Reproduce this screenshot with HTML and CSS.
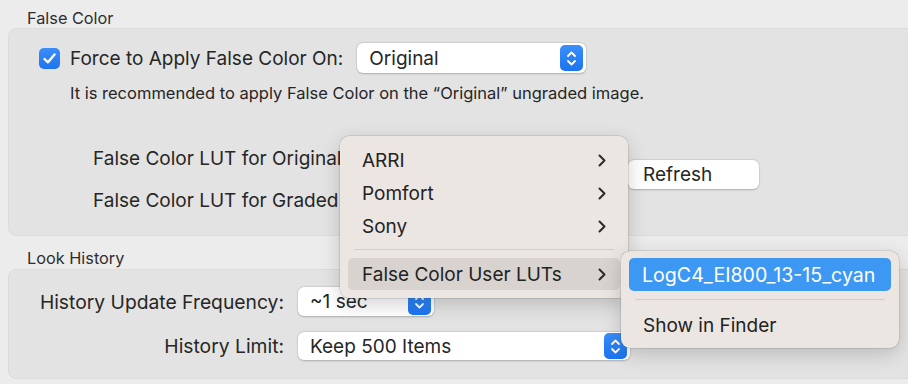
FILE: index.html
```html
<!DOCTYPE html>
<html>
<head>
<meta charset="utf-8">
<link rel="stylesheet" href="styles.css">
</head>
<body>
<div class="page">
  <div class="group-title">False Color</div>
  <div class="panel panel-fc">
    <div class="row-force">
      <span class="checkbox">
        <svg width="13" height="11" viewBox="0 0 13 11"><path d="M1.5 6 L5 9.3 L11.5 1.5" fill="none" stroke="#fff" stroke-width="2.4" stroke-linecap="round" stroke-linejoin="round"/></svg>
      </span>
      <span class="force-label">Force to Apply False Color On:</span>
      <div class="popup popup-original">
        <span class="popup-text">Original</span>
        <span class="stepper"><svg width="11" height="17" viewBox="0 0 11 17"><path d="M2 6 L5.5 2.5 L9 6 M2 11 L5.5 14.5 L9 11" fill="none" stroke="#fff" stroke-width="1.8" stroke-linecap="round" stroke-linejoin="round"/></svg></span>
      </div>
    </div>
    <div class="hint">It is recommended to apply False Color on the “Original” ungraded image.</div>
    <div class="lut-grid">
      <div class="lut-label">False Color LUT for Original</div>
      <div class="lut-slot"></div>
      <button class="push-btn">Refresh</button>
      <div class="lut-label">False Color LUT for Graded</div>
      <div class="lut-slot"></div>
    </div>
  </div>

  <div class="group-title group-title-2">Look History</div>
  <div class="panel panel-hist">
    <div class="hist-grid">
      <div class="hist-label">History Update Frequency:</div>
      <div class="popup popup-freq">
        <span class="popup-text">~1 sec</span>
        <span class="stepper"><svg width="11" height="17" viewBox="0 0 11 17"><path d="M2 6 L5.5 2.5 L9 6 M2 11 L5.5 14.5 L9 11" fill="none" stroke="#fff" stroke-width="1.8" stroke-linecap="round" stroke-linejoin="round"/></svg></span>
      </div>
      <div class="hist-label">History Limit:</div>
      <div class="popup popup-limit">
        <span class="popup-text">Keep 500 Items</span>
        <span class="stepper"><svg width="11" height="17" viewBox="0 0 11 17"><path d="M2 6 L5.5 2.5 L9 6 M2 11 L5.5 14.5 L9 11" fill="none" stroke="#fff" stroke-width="1.8" stroke-linecap="round" stroke-linejoin="round"/></svg></span>
      </div>
    </div>
  </div>

  <div class="menu menu-main">
    <div class="menu-item"><span>ARRI</span><svg class="chev" width="8" height="13" viewBox="0 0 8 13"><path d="M1.5 1.5 L6.5 6.5 L1.5 11.5" fill="none" stroke="#2a2a2a" stroke-width="2" stroke-linecap="round" stroke-linejoin="round"/></svg></div>
    <div class="menu-item"><span>Pomfort</span><svg class="chev" width="8" height="13" viewBox="0 0 8 13"><path d="M1.5 1.5 L6.5 6.5 L1.5 11.5" fill="none" stroke="#2a2a2a" stroke-width="2" stroke-linecap="round" stroke-linejoin="round"/></svg></div>
    <div class="menu-item"><span>Sony</span><svg class="chev" width="8" height="13" viewBox="0 0 8 13"><path d="M1.5 1.5 L6.5 6.5 L1.5 11.5" fill="none" stroke="#2a2a2a" stroke-width="2" stroke-linecap="round" stroke-linejoin="round"/></svg></div>
    <div class="menu-sep"></div>
    <div class="menu-item menu-item-open"><span>False Color User LUTs</span><svg class="chev" width="8" height="13" viewBox="0 0 8 13"><path d="M1.5 1.5 L6.5 6.5 L1.5 11.5" fill="none" stroke="#2a2a2a" stroke-width="2" stroke-linecap="round" stroke-linejoin="round"/></svg></div>
  </div>

  <div class="menu menu-sub">
    <div class="menu-item menu-item-sel"><span>LogC4_EI800_13-15_cyan</span></div>
    <div class="menu-sep menu-sep-sub"></div>
    <div class="menu-item"><span>Show in Finder</span></div>
  </div>
</div>
</body>
</html>
```

FILE: styles.css
```css
* { box-sizing: border-box; }
html, body {
  margin: 0;
  padding: 0;
  background: #ececec;
  overflow: hidden;
}
body {
  width: 908px;
  height: 384px;
  font-family: Inter, "Noto Sans", sans-serif;
  color: #262626;
}
.page {
  position: relative;
  width: 908px;
  height: 384px;
  padding-top: 8px;
}
.group-title {
  font-size: 16.3px;
  line-height: 20px;
  padding-left: 27px;
  color: #2e2e2e;
  height: 20px;
}
.group-title-2 {
  margin-top: 12px;
}
.panel {
  margin-left: 8px;
  margin-right: -20px;
  background: #e3e3e3;
  border: 1px solid #dcdcdc;
  border-radius: 8px;
}
.panel-fc {
  height: 208px;
  padding: 14px 0 0 30px;
}
.row-force {
  display: flex;
  align-items: center;
  height: 30px;
}
.checkbox {
  width: 21px;
  height: 21px;
  border-radius: 5px;
  background: linear-gradient(#3b8df8, #1f74ef);
  display: flex;
  align-items: center;
  justify-content: center;
  flex: none;
}
.force-label {
  font-size: 19px;
  margin-left: 10px;
  white-space: nowrap;
}
.popup {
  position: relative;
  display: flex;
  align-items: center;
  background: #fff;
  border-radius: 6px;
  box-shadow: 0 0.5px 2px rgba(0,0,0,0.22), 0 0 0 0.5px rgba(0,0,0,0.06);
  font-size: 19px;
  flex: none;
}
.popup-text {
  padding-left: 12px;
  flex: 1;
  white-space: nowrap;
}
.stepper {
  width: 23px;
  height: 26px;
  margin-right: 3px;
  border-radius: 5px;
  background: linear-gradient(#3a8ff9, #1b74f0);
  display: flex;
  align-items: center;
  justify-content: center;
  flex: none;
}
.popup-original {
  width: 229px;
  height: 30px;
  margin-left: 14px;
}
.hint {
  font-size: 16.5px;
  margin-top: 10px;
  padding-left: 31px;
  line-height: 20px;
  white-space: nowrap;
}
.lut-grid {
  display: grid;
  grid-template-columns: 258px 277px 131px;
  grid-template-rows: 42px 42px;
  margin-top: 34px;
  margin-left: 54px;
}
.lut-label {
  font-size: 19px;
  display: flex;
  align-items: center;
  white-space: nowrap;
}
.push-btn {
  grid-column: 3;
  grid-row: 1 / span 2;
  align-self: start;
  margin-top: 23px;
  height: 29px;
  width: 131px;
  border: none;
  background: #fff;
  border-radius: 6px;
  box-shadow: 0 0.5px 2px rgba(0,0,0,0.22), 0 0 0 0.5px rgba(0,0,0,0.06);
  font-family: inherit;
  font-size: 19px;
  color: #262626;
  text-align: left;
  padding-left: 15px;
}
.panel-hist {
  height: 110px;
  margin-top: 1px;
  padding-top: 17px;
}
.hist-grid {
  display: grid;
  grid-template-columns: 275px auto;
  column-gap: 14px;
  row-gap: 16px;
  align-items: center;
}
.hist-label {
  font-size: 19.3px;
  text-align: right;
  white-space: nowrap;
}
.popup-freq {
  width: 136px;
  height: 29px;
}
.popup-limit {
  width: 332px;
  height: 28px;
}
.menu {
  position: absolute;
  background: #ece6e2;
  border-radius: 9px;
  box-shadow: 0 0 0 0.5px rgba(0,0,0,0.18), 0 6px 20px rgba(0,0,0,0.18);
  padding: 7px 8px;
  font-size: 19px;
}
.menu-main {
  left: 340px;
  top: 136px;
  width: 288px;
  height: 162px;
}
.menu-item {
  height: 33px;
  display: flex;
  align-items: center;
  justify-content: space-between;
  padding: 1px 14px 0 14px;
  border-radius: 5px;
  color: #222;
  white-space: nowrap;
}
.chev { flex: none; }
.menu-sep {
  height: 16px;
  position: relative;
}
.menu-sep::after {
  content: "";
  position: absolute;
  left: 6px;
  right: 6px;
  top: 7px;
  height: 1px;
  background: #d3cdc9;
}
.menu-item-open {
  background: #d8d3cf;
  height: 32px;
  padding-right: 14px;
}
.menu-sub {
  left: 621px;
  top: 251px;
  width: 278px;
  height: 97px;
}
.menu-item-sel {
  background: #3d98f4;
  color: #fff;
  padding-left: 13px;
  font-size: 19.6px;
}
.menu-sep-sub {
  height: 17px;
}
.menu-sep-sub::after {
  top: 8px;
}
```
